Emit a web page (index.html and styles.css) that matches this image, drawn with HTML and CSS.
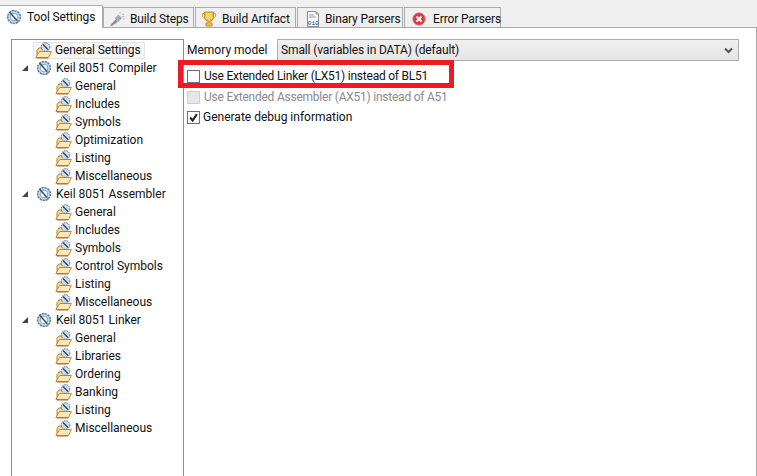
FILE: index.html
```html
<!DOCTYPE html>
<html lang="en">
<head>
<meta charset="utf-8">
<title>Tool Settings</title>
<link rel="stylesheet" href="styles.css">
</head>
<body>
<svg class="defs" width="0" height="0" aria-hidden="true">
  <defs>
    <symbol id="tool" viewBox="0 0 16 16">
      <circle cx="8" cy="8" r="6.4" fill="#c6d9e8" stroke="#56809f" stroke-width="1.5" stroke-dasharray="2.2 .8"/>
      <circle cx="8" cy="8" r="3.8" fill="#f4f8fb" stroke="#8aa8bf"/>
      <path d="M3.500 3 11 11.500" stroke="#35526c" stroke-width="1.500"/>
      <path d="M11 11.500 12.500 13.500" stroke="#a9854a" stroke-width="1.500"/>
    </symbol>
    <symbol id="folder" viewBox="0 0 17 17">
      <path d="M2 14V8.500L4 6H8V8" fill="#f8dca0" stroke="#b97f36"/>
      <path d="M.8 15.500 4.500 9.500H16.300L13.500 15.500Z" fill="#fde9b8" stroke="#c4873a"/>
      <path d="M2 16H13" stroke="#a9702c"/>
      <circle cx="10.500" cy="5" r="4.300" fill="#cfdeea" stroke="#4f7190" stroke-dasharray="1.500 .8"/>
      <path d="M8 2.500 13 7.500" stroke="#25415b" stroke-width="1.300"/>
    </symbol>
  </defs>
</svg>

<nav class="tabs">
  <div class="tab active">
    <svg class="ico"><use href="#tool"/></svg><span class="narrow">Tool Settings</span>
  </div>
  <div class="tab steps">
    <svg class="ico" viewBox="0 0 17 16"><path d="M1 15 7 8.500 9.500 11 3 15.500Z" fill="#7f8e9c"/><path d="M6 7.500 10 3.500 14 7 10 11Z" fill="#9eacb8"/><path d="M11 1.500h1.500M14 3h2M14 5.500h2.500M15 8h1.500" stroke="#a9b4bd"/></svg><span class="narrow">Build Steps</span>
  </div>
  <div class="tab artifact">
    <svg class="ico" viewBox="0 0 16 16"><path d="M3.500 1H12.500V6.500Q12.500 9.500 9 10V12H11V15H5V12H7V10Q3.500 9.500 3.500 6.500Z" fill="#f3bd3a" stroke="#c78f22"/><path d="M3.500 2.500H1.500V5.500L3.500 7M12.500 2.500H14.500V5.500L12.500 7" fill="none" stroke="#d9a22e"/><path d="M6 2V8M8 2V9M10 2V8" stroke="#ffe9a0"/></svg><span class="narrow">Build Artifact</span>
  </div>
  <div class="tab binary">
    <svg class="ico" viewBox="0 0 16 16"><path d="M2.500.5H11L13.500 3V15.500H2.500Z" fill="#fff" stroke="#7d8fa3"/><path d="M11 .5V3H13.500" fill="#e9c98c" stroke="#b58a3a"/><path d="M4 4H9M4 6H11" stroke="#7a9cc0"/><text x="2.800" y="14" class="bits">010</text></svg><span class="narrow">Binary Parsers</span>
  </div>
  <div class="tab error">
    <svg class="ico" viewBox="0 0 16 16"><circle cx="8" cy="8" r="6.500" fill="#e2393f" stroke="#c9c2c2"/><path d="M5.500 5.500 10.500 10.500M10.500 5.500 5.500 10.500" stroke="#fff" stroke-width="2"/></svg><span class="narrow">Error Parsers</span>
  </div>
</nav>

<main class="panel">
  <aside class="tree">
    <div class="row first"><div class="selected"><svg class="ico17"><use href="#folder"/></svg><span class="narrow">General Settings</span></div></div>

    <div class="row top"><i class="arrow"></i><svg class="ico"><use href="#tool"/></svg><span>Keil 8051 Compiler</span></div>
    <div class="row leaf"><svg class="ico17"><use href="#folder"/></svg><span>General</span></div>
    <div class="row leaf"><svg class="ico17"><use href="#folder"/></svg><span>Includes</span></div>
    <div class="row leaf"><svg class="ico17"><use href="#folder"/></svg><span>Symbols</span></div>
    <div class="row leaf"><svg class="ico17"><use href="#folder"/></svg><span>Optimization</span></div>
    <div class="row leaf"><svg class="ico17"><use href="#folder"/></svg><span>Listing</span></div>
    <div class="row leaf"><svg class="ico17"><use href="#folder"/></svg><span>Miscellaneous</span></div>

    <div class="row top"><i class="arrow"></i><svg class="ico"><use href="#tool"/></svg><span>Keil 8051 Assembler</span></div>
    <div class="row leaf"><svg class="ico17"><use href="#folder"/></svg><span>General</span></div>
    <div class="row leaf"><svg class="ico17"><use href="#folder"/></svg><span>Includes</span></div>
    <div class="row leaf"><svg class="ico17"><use href="#folder"/></svg><span>Symbols</span></div>
    <div class="row leaf"><svg class="ico17"><use href="#folder"/></svg><span>Control Symbols</span></div>
    <div class="row leaf"><svg class="ico17"><use href="#folder"/></svg><span>Listing</span></div>
    <div class="row leaf"><svg class="ico17"><use href="#folder"/></svg><span>Miscellaneous</span></div>

    <div class="row top"><i class="arrow"></i><svg class="ico"><use href="#tool"/></svg><span>Keil 8051 Linker</span></div>
    <div class="row leaf"><svg class="ico17"><use href="#folder"/></svg><span>General</span></div>
    <div class="row leaf"><svg class="ico17"><use href="#folder"/></svg><span>Libraries</span></div>
    <div class="row leaf"><svg class="ico17"><use href="#folder"/></svg><span>Ordering</span></div>
    <div class="row leaf"><svg class="ico17"><use href="#folder"/></svg><span>Banking</span></div>
    <div class="row leaf"><svg class="ico17"><use href="#folder"/></svg><span>Listing</span></div>
    <div class="row leaf"><svg class="ico17"><use href="#folder"/></svg><span>Miscellaneous</span></div>
  </aside>

  <section class="settings">
    <div class="model">
      <span class="model-label">Memory model</span>
      <div class="select">
        <span class="narrow">Small (variables in DATA) (default)</span>
        <svg class="chev" viewBox="0 0 9 7"><path d="M1 1.500 4.500 5 8 1.500" fill="none" stroke="#555" stroke-width="2"/></svg>
      </div>
    </div>
    <div class="check"><i class="box"></i><span class="tight">Use Extended Linker (LX51) instead of BL51</span></div>
    <div class="check disabled"><i class="box"></i><span class="tight">Use Extended Assembler (AX51) instead of A51</span></div>
    <div class="check"><i class="box"><svg viewBox="0 0 13 13"><path d="M2.500 6.500 5.500 10 10.500 2.500" fill="none" stroke="#222" stroke-width="2.400"/></svg></i><span>Generate debug information</span></div>
    <div class="highlight"></div>
  </section>
</main>
</body>
</html>
```
FILE: styles.css
```css
* { box-sizing: border-box; }
html, body { margin: 0; height: 100%; }
body {
  width: 757px;
  height: 476px;
  overflow: hidden;
  background: #f0f0f0;
  color: #111;
  font: 12px/16px Roboto, "Open Sans", sans-serif;
  display: flex;
  flex-direction: column;
}
.defs { position: absolute; }
.ico { width: 16px; height: 16px; flex: none; }
.ico17 { width: 17px; height: 17px; flex: none; }
.bits { font: 6px "Liberation Mono", monospace; fill: #20405f; }
.narrow { letter-spacing: -.13px; }
.tight { letter-spacing: -.23px; margin-left: 1px; }

.tabs {
  height: 28px;
  display: flex;
  align-items: flex-end;
  gap: 1px;
  border-bottom: 1px solid #a9a9a9;
  flex: none;
}
.tab {
  height: 20px;
  display: flex;
  align-items: center;
  padding: 2px 0 0 5px;
  background: #f0f0f0;
  border: 1px solid #acacac;
  border-bottom: 0;
  white-space: nowrap;
}
.tab.active {
  width: 103px;
  height: 23px;
  margin-bottom: -1px;
  margin-right: -1px;
  background: #fff;
  border-left: 0;
  padding: 0 0 0 6px;
  gap: 5px;
}
.steps { width: 91px; gap: 5px; }
.artifact { width: 101px; gap: 5px; }
.binary { width: 106px; gap: 4px; padding-left: 7px; }
.error { width: 97px; gap: 6px; padding-left: 6px; }

.panel {
  flex: 1;
  min-height: 0;
  display: flex;
  background: #fff;
  border-right: 1px solid #a9a9a9;
  padding: 11px 17px 0 11px;
}
.tree {
  width: 173px;
  flex: none;
  border: 1px solid #8f8f95;
  border-bottom: 0;
  padding-top: 1px;
}
.row { height: 18px; display: flex; align-items: center; white-space: nowrap; }
.first { padding-left: 21px; }
.top { padding-left: 10px; }
.top .ico { margin: 0 4px 0 8px; }
.leaf { padding-left: 43px; gap: 3px; }
.selected {
  width: 112px;
  height: 17px;
  display: flex;
  align-items: center;
  gap: 3px;
  background: #f6f6f6;
  border: 1px solid #e4e4e4;
  padding-left: 1px;
}
.arrow {
  width: 0;
  height: 0;
  border-left: 6px solid transparent;
  border-bottom: 6px solid #444;
  flex: none;
}

.settings {
  flex: 1;
  position: relative;
  padding-left: 3px;
}
.model { display: flex; align-items: center; height: 22px; margin-bottom: 6px; }
.model-label { width: 90px; flex: none; }
.select {
  flex: 1;
  height: 22px;
  display: flex;
  align-items: center;
  justify-content: space-between;
  padding: 0 5px 0 3px;
  border: 1px solid #acacac;
  background: linear-gradient(#f0f0f0, #e6e6e6);
}
.chev { width: 9px; height: 7px; }
.check { display: flex; align-items: center; gap: 3px; height: 18px; margin-bottom: 2px; }
.check:nth-of-type(2) { margin-bottom: 3px; }
.box {
  width: 13px;
  height: 13px;
  flex: none;
  display: block;
  border: 1px solid #707070;
  background: #fff;
}
.box svg { display: block; width: 11px; height: 11px; }
.disabled { color: #8a8a8a; }
.disabled .box { border-color: #cfcfcf; background: #e6e6e6; }
.highlight {
  position: absolute;
  left: -6px;
  top: 21px;
  width: 276px;
  height: 28px;
  border: 5px solid #ed1c24;
  pointer-events: none;
}
```
